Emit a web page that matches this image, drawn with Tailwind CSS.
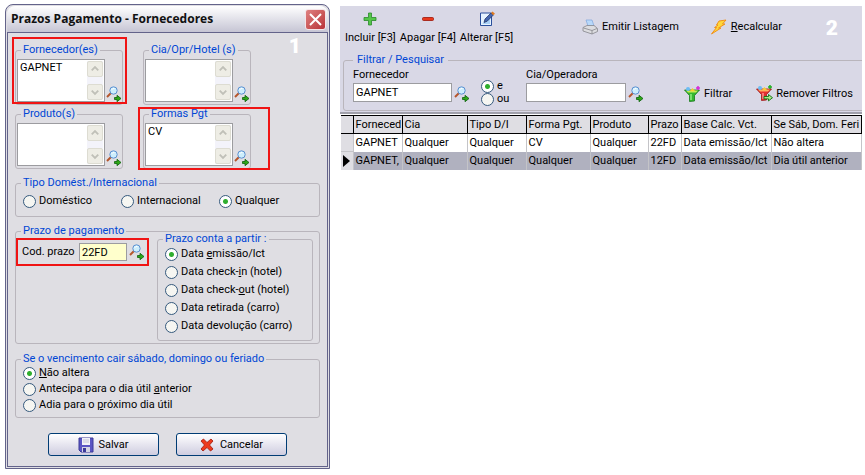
<!DOCTYPE html>
<html lang="pt-BR">
<head>
  <meta charset="UTF-8">
  <meta name="viewport" content="width=device-width, initial-scale=1.0">
  <title>Prazos Pagamento - Fornecedores</title>
  <script src="https://cdn.jsdelivr.net/npm/@tailwindcss/browser@4"></script>
</head>
<body class="bg-white font-[Roboto,'Liberation_Sans',sans-serif] text-[11px] leading-[14px] text-black">
  <!-- Shared icons -->
  <svg class="hidden">
    <symbol id="search" viewBox="0 0 16 16">
      <path d="M1 11 5 7" stroke="#b5562c" stroke-width="2"/>
      <circle cx="7.500" cy="4.500" r="3.700" fill="#cdeefc" stroke="#5b8fd0"/>
      <path d="M5.500 4q1-2 3-1.500" stroke="#fff" fill="none"/>
      <path d="M8.500 11.500h2.500v-2.200l4 3.200-4 3.200v-2.200h-2.500z" fill="#2fa818" stroke="#0d5f0d" stroke-width=".8"/>
    </symbol>
    <symbol id="up" viewBox="0 0 15 15">
      <path d="M4 9l3.500-3.500L11 9" fill="none" stroke="#c0c0b8" stroke-width="2"/>
    </symbol>
    <symbol id="down" viewBox="0 0 15 15">
      <path d="M4 6l3.500 3.500L11 6" fill="none" stroke="#c0c0b8" stroke-width="2"/>
    </symbol>
  </svg>

  <div class="flex items-start gap-[10px] pt-1 pr-[3px] pl-[5px]">
    <!-- Dialog -->
    <main class="relative w-[325px] shrink-0 rounded-t-lg border border-[#63638a] bg-[#dfdee3] p-px">
      <header class="flex h-[26px] items-center justify-between rounded-t-lg bg-linear-to-b from-white to-[#c6c5d4] pr-[2px] pl-1">
        <h1 class="font-['Open_Sans',sans-serif] text-[12px] font-bold text-[#111]">Prazos Pagamento - Fornecedores</h1>
        <button aria-label="Fechar" class="flex size-[21px] items-center justify-center rounded-[3px] border border-[#f4e4e8] bg-linear-to-br from-[#de8080] to-[#b83038]">
          <svg class="size-[13px]" viewBox="0 0 13 13"><path d="M1 1l11 11M12 1 1 12" stroke="#fff" stroke-width="2"/></svg>
        </button>
      </header>
      <span class="absolute top-6 right-7 text-[21px] leading-[34px] font-black text-white">1</span>

      <form class="border border-[#63638a] px-[7px] pt-[10px] pb-[10px]">
        <!-- Lists -->
        <div class="grid grid-cols-[108px_108px] gap-x-5 gap-y-[2px]">
          <fieldset class="relative h-[62px] min-w-0 rounded-[3px] border border-[#b9b5bc] px-px">
            <legend class="ml-1 px-[2px] text-[#0046d5]">Fornecedor(es)</legend>
            <div class="flex items-end gap-px pt-[2px]">
              <div class="flex h-[43px] w-[88px] shrink-0 border border-[#9c9ca0] bg-white p-px">
                <textarea aria-label="Fornecedor(es)" class="w-[68px] resize-none overflow-hidden pl-px outline-none">GAPNET</textarea>
                <div class="flex flex-1 flex-col justify-between bg-[#f3f3fa]">
                  <svg class="size-4 rounded-[2px] border border-[#dddcd2] bg-[#eeede5]"><use href="#up"/></svg>
                  <svg class="size-4 rounded-[2px] border border-[#dddcd2] bg-[#eeede5]"><use href="#down"/></svg>
                </div>
              </div>
              <button type="button" aria-label="Procurar fornecedor"><svg class="size-4"><use href="#search"/></svg></button>
            </div>
            <div class="pointer-events-none absolute -top-5 -left-1 h-[67px] w-[115px] border-2 border-[#f01414]"></div>
          </fieldset>

          <fieldset class="h-[62px] min-w-0 rounded-[3px] border border-[#b9b5bc] px-px">
            <legend class="ml-1 px-[2px] text-[#0046d5]">Cia/Opr/Hotel (s)</legend>
            <div class="flex items-end gap-px pt-[2px]">
              <div class="flex h-[43px] w-[88px] shrink-0 border border-[#9c9ca0] bg-white p-px">
                <textarea aria-label="Cia/Opr/Hotel (s)" class="w-[68px] resize-none overflow-hidden pl-px outline-none"></textarea>
                <div class="flex flex-1 flex-col justify-between bg-[#f3f3fa]">
                  <svg class="size-4 rounded-[2px] border border-[#dddcd2] bg-[#eeede5]"><use href="#up"/></svg>
                  <svg class="size-4 rounded-[2px] border border-[#dddcd2] bg-[#eeede5]"><use href="#down"/></svg>
                </div>
              </div>
              <button type="button" aria-label="Procurar cia"><svg class="size-4"><use href="#search"/></svg></button>
            </div>
          </fieldset>

          <fieldset class="h-[62px] min-w-0 rounded-[3px] border border-[#b9b5bc] px-px">
            <legend class="ml-1 px-[2px] text-[#0046d5]">Produto(s)</legend>
            <div class="flex items-end gap-px pt-[2px]">
              <div class="flex h-[43px] w-[88px] shrink-0 border border-[#9c9ca0] bg-white p-px">
                <textarea aria-label="Produto(s)" class="w-[68px] resize-none overflow-hidden pl-px outline-none"></textarea>
                <div class="flex flex-1 flex-col justify-between bg-[#f3f3fa]">
                  <svg class="size-4 rounded-[2px] border border-[#dddcd2] bg-[#eeede5]"><use href="#up"/></svg>
                  <svg class="size-4 rounded-[2px] border border-[#dddcd2] bg-[#eeede5]"><use href="#down"/></svg>
                </div>
              </div>
              <button type="button" aria-label="Procurar produto"><svg class="size-4"><use href="#search"/></svg></button>
            </div>
          </fieldset>

          <fieldset class="relative h-[62px] min-w-0 rounded-[3px] border border-[#b9b5bc] px-px">
            <legend class="ml-1 px-[2px] text-[#0046d5]">Formas Pgt</legend>
            <div class="flex items-end gap-px pt-[2px]">
              <div class="flex h-[43px] w-[88px] shrink-0 border border-[#9c9ca0] bg-white p-px">
                <textarea aria-label="Formas Pgt" class="w-[68px] resize-none overflow-hidden pl-px outline-none">CV</textarea>
                <div class="flex flex-1 flex-col justify-between bg-[#f3f3fa]">
                  <svg class="size-4 rounded-[2px] border border-[#dddcd2] bg-[#eeede5]"><use href="#up"/></svg>
                  <svg class="size-4 rounded-[2px] border border-[#dddcd2] bg-[#eeede5]"><use href="#down"/></svg>
                </div>
              </div>
              <button type="button" aria-label="Procurar forma"><svg class="size-4"><use href="#search"/></svg></button>
            </div>
            <div class="pointer-events-none absolute -top-[14px] -left-[6px] h-[63px] w-[132px] border-2 border-[#f01414]"></div>
          </fieldset>
        </div>

        <fieldset class="mt-[7px] h-[41px] rounded-[3px] border border-[#b9b5bc] px-[7px]">
          <legend class="-ml-[2px] px-[2px] text-[#0046d5]">Tipo Domést./Internacional</legend>
          <div class="grid grid-cols-[98px_98px_1fr] pt-1">
            <label class="flex items-center gap-[3px]"><input type="radio" name="tipo" class="size-[13px] appearance-none rounded-full border border-[#35597d] bg-[#f6f6f2] checked:bg-[radial-gradient(circle,#2fae2f_2px,#fff_3px)]">Doméstico</label>
            <label class="flex items-center gap-[3px]"><input type="radio" name="tipo" class="size-[13px] appearance-none rounded-full border border-[#35597d] bg-[#f6f6f2] checked:bg-[radial-gradient(circle,#2fae2f_2px,#fff_3px)]">Internacional</label>
            <label class="flex items-center gap-[3px]"><input type="radio" name="tipo" checked class="size-[13px] appearance-none rounded-full border border-[#35597d] bg-[#f6f6f2] checked:bg-[radial-gradient(circle,#2fae2f_2px,#fff_3px)]">Qualquer</label>
          </div>
        </fieldset>

        <fieldset class="mt-[7px] h-[120px] rounded-[3px] border border-[#b9b5bc] pr-[6px]">
          <legend class="ml-[5px] px-[2px] text-[#0046d5]">Prazo de pagamento</legend>
          <div class="flex items-start justify-between">
            <div class="flex h-7 w-[133px] items-center border-2 border-[#f01414] pl-1">
              <label for="prazo" class="w-[57px]">Cod. prazo</label>
              <input id="prazo" value="22FD" class="mr-[2px] h-[18px] w-[48px] border border-[#9c9ca0] bg-[#ffffcc] px-[2px] outline-none">
              <button type="button" aria-label="Procurar prazo"><svg class="size-4"><use href="#search"/></svg></button>
            </div>
            <fieldset class="-mt-[6px] h-[109px] w-[156px] rounded-[3px] border border-[#b9b5bc] px-[7px]">
              <legend class="-ml-[2px] px-[2px] text-[#0046d5]">Prazo conta a partir :</legend>
              <div class="flex flex-col gap-1 pt-px">
                <label class="flex items-center gap-[3px]"><input type="radio" name="conta" checked class="size-[13px] appearance-none rounded-full border border-[#35597d] bg-[#f6f6f2] checked:bg-[radial-gradient(circle,#2fae2f_2px,#fff_3px)]"><span>Data <u>e</u>missão/lct</span></label>
                <label class="flex items-center gap-[3px]"><input type="radio" name="conta" class="size-[13px] appearance-none rounded-full border border-[#35597d] bg-[#f6f6f2] checked:bg-[radial-gradient(circle,#2fae2f_2px,#fff_3px)]"><span>Data check-<u>i</u>n (hotel)</span></label>
                <label class="flex items-center gap-[3px]"><input type="radio" name="conta" class="size-[13px] appearance-none rounded-full border border-[#35597d] bg-[#f6f6f2] checked:bg-[radial-gradient(circle,#2fae2f_2px,#fff_3px)]"><span>Data check-<u>o</u>ut (hotel)</span></label>
                <label class="flex items-center gap-[3px]"><input type="radio" name="conta" class="size-[13px] appearance-none rounded-full border border-[#35597d] bg-[#f6f6f2] checked:bg-[radial-gradient(circle,#2fae2f_2px,#fff_3px)]"><span>Data retirada (carro)</span></label>
                <label class="flex items-center gap-[3px]"><input type="radio" name="conta" class="size-[13px] appearance-none rounded-full border border-[#35597d] bg-[#f6f6f2] checked:bg-[radial-gradient(circle,#2fae2f_2px,#fff_3px)]"><span>Data devolução (carro)</span></label>
              </div>
            </fieldset>
          </div>
        </fieldset>

        <fieldset class="mt-2 h-[66px] rounded-[3px] border border-[#b9b5bc] px-[7px]">
          <legend class="-ml-[2px] px-[2px] text-[#0046d5]">Se o vencimento cair sábado, domingo ou feriado</legend>
          <div class="flex flex-col gap-[2px]">
            <label class="flex items-center gap-[3px]"><input type="radio" name="venc" checked class="size-[13px] appearance-none rounded-full border border-[#35597d] bg-[#f6f6f2] checked:bg-[radial-gradient(circle,#2fae2f_2px,#fff_3px)]"><span><u>N</u>ão altera</span></label>
            <label class="flex items-center gap-[3px]"><input type="radio" name="venc" class="size-[13px] appearance-none rounded-full border border-[#35597d] bg-[#f6f6f2] checked:bg-[radial-gradient(circle,#2fae2f_2px,#fff_3px)]"><span>Antecipa para o dia útil <u>a</u>nterior</span></label>
            <label class="flex items-center gap-[3px]"><input type="radio" name="venc" class="size-[13px] appearance-none rounded-full border border-[#35597d] bg-[#f6f6f2] checked:bg-[radial-gradient(circle,#2fae2f_2px,#fff_3px)]"><span>Adia para o <u>p</u>róximo dia útil</span></label>
          </div>
        </fieldset>

        <div class="mt-[15px] flex justify-center gap-[17px]">
          <button type="button" class="flex h-[23px] w-[111px] items-center justify-center gap-1 rounded-[3px] border border-[#003c74] bg-linear-to-b from-white to-[#cfcde0]">
            <svg class="size-4" viewBox="0 0 16 16"><path d="M1 1h14v14H3l-2-2z" fill="#5a55c4" stroke="#3c3a98"/><path d="M4 1h8v7H4z" fill="#f1f1f8"/><path d="M5 3h6M5 5h6" stroke="#c5c5d5"/><path d="M4 10h8v5H4z" fill="#d4d4e4"/><path d="M5 11h3v4H5z" fill="#3c3a98"/></svg>
            Salvar
          </button>
          <button type="button" class="flex h-[23px] w-[111px] items-center justify-center gap-[6px] rounded-[3px] border border-[#003c74] bg-linear-to-b from-white to-[#cfcde0]">
            <svg class="size-[14px]" viewBox="0 0 14 14"><path d="M1 3 3.500 1 7 4.500 11 1l2 2-3.500 4 3.500 4-2.500 2L7 9.500 3 13l-2-2 3.500-4z" fill="#ee3a1c" stroke="#a01808" stroke-width=".8"/></svg>
            Cancelar
          </button>
        </div>
      </form>
    </main>

    <!-- List window -->
    <section class="mt-[2px] min-w-0 flex-1 overflow-hidden">
      <div class="border-b-2 border-[#a0a0aa] bg-[#d9d8e6] pl-[3px]">
        <div class="flex h-[47px] items-start">
          <div class="flex w-[186px] gap-1 pt-[5px] pl-[2px] whitespace-nowrap">
            <button class="flex flex-col items-center gap-1">
              <svg class="size-4" viewBox="0 0 16 16"><path d="M6.500 2h3v4.500H14v3H9.500V14h-3V9.500H2v-3h4.500z" fill="#55c64a" stroke="#2a8a2a" stroke-width=".8"/></svg>
              Incluir [F3]
            </button>
            <button class="flex flex-col items-center gap-1">
              <svg class="size-4" viewBox="0 0 16 16"><rect x="2.500" y="6.500" width="11" height="3" rx="1" fill="#e8381c" stroke="#9c1408" stroke-width=".8"/></svg>
              Apagar [F4]
            </button>
            <button class="flex flex-col items-center gap-1">
              <svg class="size-4" viewBox="0 0 16 16"><path d="M1.500 2h11v12.500h-11z" fill="#e6f3ff" stroke="#2a4f9c"/><path d="M3 13h8V6z" fill="#a9d0f5"/><path d="M5 11.500 6 8l6-6 2.200 2.200-6 6z" fill="#4466b0" stroke="#1b2c5c" stroke-width=".7"/><path d="m12 2 1.500-1.500L16 2.800l-1.800 1.400z" fill="#e07a20"/></svg>
              Alterar [F5]
            </button>
          </div>
          <div class="flex flex-1 items-start pt-[13px] pl-[53px] whitespace-nowrap">
            <button class="flex items-center gap-1">
              <svg class="size-4" viewBox="0 0 16 16"><path d="M4 1h6l2 6H6z" fill="#b8d8fa" stroke="#7fa6dc" stroke-width=".7"/><path d="M1 8.500 5 6.500h7l3.500 3v3L10 15l-9-3z" fill="#dcdce0" stroke="#85858c" stroke-width=".8"/><path d="m1.500 9 8.500 2.500 5-2M10 11.500V15" fill="none" stroke="#85858c" stroke-width=".8"/></svg>
              Emitir Listagem
            </button>
            <button class="ml-8 flex items-center gap-1">
              <svg class="size-4" viewBox="0 0 16 16"><path d="M8 2 15 1l-3.500 4H14L7.500 9H10L.5 15l5-6.500H3.500L7 6H5.500z" fill="#ffd83a" stroke="#f08a10" stroke-width=".9"/></svg>
              <span><u>R</u>ecalcular</span>
            </button>
            <span class="ml-auto pr-6 text-[21px] leading-[18px] font-black text-white">2</span>
          </div>
        </div>

        <fieldset class="-mr-1 h-[58px] rounded-[3px] border border-[#b9b5bc] pl-[9px]">
          <legend class="px-1 text-[#0046d5]">Filtrar / Pesquisar</legend>
          <div class="flex items-end whitespace-nowrap pt-px">
            <div class="flex w-[99px] flex-col gap-px">
              <label for="fornecedor">Fornecedor</label>
              <input id="fornecedor" value="GAPNET" class="h-[19px] w-full border border-[#9c9ca0] bg-white px-[2px] outline-none">
            </div>
            <button aria-label="Procurar fornecedor" class="ml-[2px]"><svg class="size-4"><use href="#search"/></svg></button>
            <div class="ml-[11px] flex w-[45px] translate-y-1 flex-col -space-y-px">
              <label class="flex items-center gap-[3px]"><input type="radio" name="op" checked class="size-[13px] appearance-none rounded-full border border-[#35597d] bg-[#f6f6f2] checked:bg-[radial-gradient(circle,#2fae2f_2px,#fff_3px)]">e</label>
              <label class="flex items-center gap-[3px]"><input type="radio" name="op" class="size-[13px] appearance-none rounded-full border border-[#35597d] bg-[#f6f6f2] checked:bg-[radial-gradient(circle,#2fae2f_2px,#fff_3px)]">ou</label>
            </div>
            <div class="flex w-[100px] flex-col gap-px">
              <label for="cia">Cia/Operadora</label>
              <input id="cia" class="h-[19px] w-full border border-[#9c9ca0] bg-white px-[2px] outline-none">
            </div>
            <button aria-label="Procurar cia" class="ml-[2px]"><svg class="size-4"><use href="#search"/></svg></button>
            <button class="ml-10 flex items-center gap-1">
              <svg class="size-4" viewBox="0 0 16 16"><path d="M.5 4h15L10.500 9.500V15l-5 .5v-6z" fill="#35b830" stroke="#17791a" stroke-width=".8"/><path d="M2 4.500h12L12 6.500H4z" fill="#c8e850"/><path d="M7 8v6" stroke="#90ec80" stroke-width="1.500"/><circle cx="4" cy="3" r="2" fill="#6cbcf4"/><path d="m6 5 2.500-3L11 5z" fill="#f8cc30"/><path d="M14 0v4M12 2h4" stroke="#d828d8" stroke-width="1.500"/></svg>
              Filtrar
            </button>
            <button class="ml-6 flex items-center gap-[3px]">
              <svg class="size-[17px]" viewBox="0 0 17 17"><path d="M.5 4h15L10.500 9.500V15l-5 .5v-6z" fill="#e43030" stroke="#9c1818" stroke-width=".8"/><path d="M2 4.500h12L12 6.500H4z" fill="#ffb060"/><path d="M7 8v6" stroke="#ff9090" stroke-width="1.500"/><circle cx="4" cy="3" r="2" fill="#6cbcf4"/><path d="m6 5 2.500-3L11 5z" fill="#f8cc30"/><path d="M14 0v4M12 2h4" stroke="#20b020" stroke-width="1.500"/><path d="M8 11.500h4.500V9.500l4 3.200-4 3.200v-2H8z" fill="#a8e888" stroke="#0d6f0d" stroke-width=".9"/></svg>
              Remover Filtros
            </button>
          </div>
        </fieldset>
        <div class="h-px"></div>
      </div>

      <div class="pt-px pl-px">
        <table class="w-full table-fixed border-collapse text-left whitespace-nowrap">
          <colgroup>
            <col class="w-3"><col class="w-[49px]"><col class="w-[65px]"><col class="w-[59px]"><col class="w-[64px]"><col class="w-[58px]"><col class="w-[33px]"><col class="w-[90px]"><col>
          </colgroup>
          <thead class="bg-[#dfdee3]">
            <tr class="h-[18px] border-y border-black *:overflow-hidden *:border-r *:border-black *:pl-[2px] *:font-normal">
              <th></th><th>Forneced</th><th>Cia</th><th>Tipo D/I</th><th>Forma Pgt.</th><th>Produto</th><th>Prazo</th><th>Base Calc. Vct.</th><th>Se Sáb, Dom. Feri</th>
            </tr>
          </thead>
          <tbody>
            <tr class="h-[18px] *:overflow-hidden *:border-r *:border-[#c4c4c8] *:pl-[2px]">
              <td class="border-b border-b-black bg-[#dfdee3]"></td><td>GAPNET</td><td>Qualquer</td><td>Qualquer</td><td>CV</td><td>Qualquer</td><td>22FD</td><td>Data emissão/lct</td><td>Não altera</td>
            </tr>
            <tr class="h-[18px] bg-[#b0b1bf] *:overflow-hidden *:border-r *:border-[#c4c4c8] *:pl-[2px]">
              <td class="bg-[#dfdee3]"><svg class="h-3 w-[7px]" viewBox="0 0 7 12"><path d="M0 0l7 6-7 6z"/></svg></td><td>GAPNET,</td><td>Qualquer</td><td>Qualquer</td><td>Qualquer</td><td>Qualquer</td><td>12FD</td><td>Data emissão/lct</td><td>Dia útil anterior</td>
            </tr>
          </tbody>
        </table>
      </div>
    </section>
  </div>
</body>
</html>
